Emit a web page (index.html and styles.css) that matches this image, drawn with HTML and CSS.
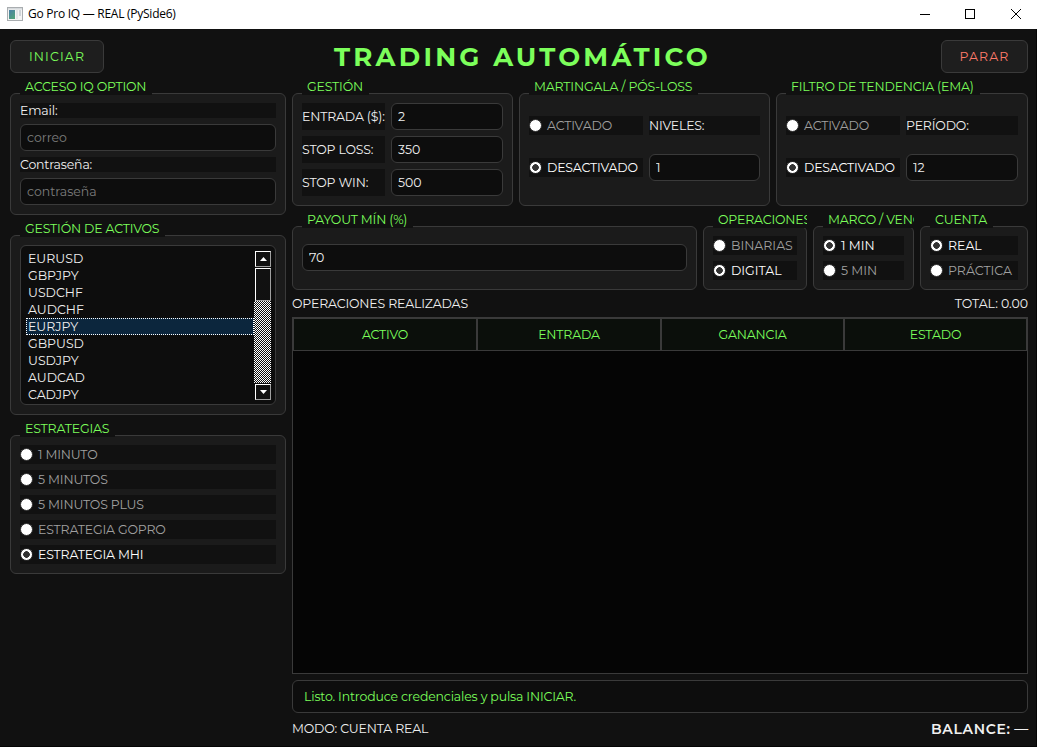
FILE: index.html
```html
<!DOCTYPE html>
<html lang="es">
  <head>
    <meta charset="UTF-8" />
    <meta name="viewport" content="width=device-width, initial-scale=1.0" />
    <title>Go Pro IQ — REAL (PySide6)</title>
    <link rel="stylesheet" href="styles.css">
  </head>
  <body>
    <div class="barra">
      <svg class="icono-app" width="16" height="14" viewBox="0 0 16 14">
        <defs>
          <linearGradient id="azul" x1="0" y1="0" x2="0.6" y2="1">
            <stop offset="0" stop-color="#4a7fa8" />
            <stop offset="1" stop-color="#4fa07c" />
          </linearGradient>
        </defs>
        <rect x="0.5" y="0.5" width="15" height="13" fill="#f4f4f4" stroke="#a9adb0" />
        <rect x="1" y="1" width="14" height="1.5" fill="#d5d9dc" />
        <rect x="2" y="3" width="6" height="9" fill="url(#azul)" />
        <rect x="9" y="3" width="2" height="9" fill="#e2e5e8" />
        <rect x="12" y="3" width="2" height="6" fill="#cfd4d8" />
      </svg>
      <span class="barra-titulo">Go Pro IQ — REAL (PySide6)</span>
      <svg class="controles" width="102" height="12" viewBox="0 0 102 12" fill="none" stroke="#000">
        <path d="M0 6.5h10" />
        <rect x="45.5" y="1.5" width="9" height="9" />
        <path d="M91 1l10 10M101 1L91 11" />
      </svg>
    </div>

    <div class="ventana">
      <header class="cabecera">
        <button class="boton iniciar" type="button">INICIAR</button>
        <h1>TRADING AUTOMÁTICO</h1>
        <button class="boton parar" type="button">PARAR</button>
      </header>

      <div class="contenido">
        <aside class="izquierda">
          <section class="grupo acceso">
            <h2>ACCESO IQ OPTION</h2>
            <label class="etiqueta" for="email">Email:</label>
            <input type="text" id="email" placeholder="correo" />
            <label class="etiqueta" for="clave">Contraseña:</label>
            <input type="password" id="clave" placeholder="contraseña" />
          </section>

          <section class="grupo activos">
            <h2>GESTIÓN DE ACTIVOS</h2>
            <div class="lista">
              <ul>
                <li>EURUSD</li>
                <li>GBPJPY</li>
                <li>USDCHF</li>
                <li>AUDCHF</li>
                <li class="elegido">EURJPY</li>
                <li>GBPUSD</li>
                <li>USDJPY</li>
                <li>AUDCAD</li>
                <li>CADJPY</li>
              </ul>
              <div class="scroll">
                <div class="flecha"><svg width="7" height="4"><path d="M0 4L3.5 0L7 4z" fill="#fff" /></svg></div>
                <div class="pulgar"></div>
                <div class="pista"></div>
                <div class="flecha"><svg width="7" height="4"><path d="M0 0L3.5 4L7 0z" fill="#fff" /></svg></div>
              </div>
            </div>
          </section>

          <section class="grupo radios">
            <h2>ESTRATEGIAS</h2>
            <label class="radio"><input type="radio" name="estrategia" /><span>1 MINUTO</span></label>
            <label class="radio"><input type="radio" name="estrategia" /><span>5 MINUTOS</span></label>
            <label class="radio"><input type="radio" name="estrategia" /><span>5 MINUTOS PLUS</span></label>
            <label class="radio"><input type="radio" name="estrategia" /><span>ESTRATEGIA GOPRO</span></label>
            <label class="radio"><input type="radio" name="estrategia" checked /><span>ESTRATEGIA MHI</span></label>
          </section>
        </aside>

        <main class="derecha">
          <div class="fila fila-gestion">
            <section class="grupo gestion">
              <h2>GESTIÓN</h2>
              <label class="etiqueta" for="entrada">ENTRADA ($):</label>
              <input type="text" id="entrada" value="2" />
              <label class="etiqueta" for="loss">STOP LOSS:</label>
              <input type="text" id="loss" value="350" />
              <label class="etiqueta" for="win">STOP WIN:</label>
              <input type="text" id="win" value="500" />
            </section>

            <section class="grupo doble">
              <h2>MARTINGALA / PÓS-LOSS</h2>
              <label class="radio"><input type="radio" name="martingala" /><span>ACTIVADO</span></label>
              <label class="etiqueta" for="niveles">NIVELES:</label>
              <label class="radio"><input type="radio" name="martingala" checked /><span>DESACTIVADO</span></label>
              <input type="text" id="niveles" value="1" />
            </section>

            <section class="grupo doble">
              <h2>FILTRO DE TENDENCIA (EMA)</h2>
              <label class="radio"><input type="radio" name="filtro" /><span>ACTIVADO</span></label>
              <label class="etiqueta" for="periodo">PERÍODO:</label>
              <label class="radio"><input type="radio" name="filtro" checked /><span>DESACTIVADO</span></label>
              <input type="text" id="periodo" value="12" />
            </section>
          </div>

          <div class="fila fila-payout">
            <section class="grupo payout">
              <h2>PAYOUT MÍN (%)</h2>
              <input type="text" id="payout" value="70" />
            </section>

            <section class="grupo radios">
              <h2>OPERACIONES</h2>
              <label class="radio"><input type="radio" name="operaciones" /><span>BINARIAS</span></label>
              <label class="radio"><input type="radio" name="operaciones" checked /><span>DIGITAL</span></label>
            </section>

            <section class="grupo radios">
              <h2>MARCO / VENC</h2>
              <label class="radio"><input type="radio" name="marco" checked /><span>1 MIN</span></label>
              <label class="radio"><input type="radio" name="marco" /><span>5 MIN</span></label>
            </section>

            <section class="grupo radios">
              <h2>CUENTA</h2>
              <label class="radio"><input type="radio" name="cuenta" checked /><span>REAL</span></label>
              <label class="radio"><input type="radio" name="cuenta" /><span>PRÁCTICA</span></label>
            </section>
          </div>

          <div class="resumen">
            <span>OPERACIONES REALIZADAS</span>
            <span class="total">TOTAL: 0.00</span>
          </div>

          <div class="tabla">
            <div class="tabla-cabecera">
              <div>ACTIVO</div>
              <div>ENTRADA</div>
              <div>GANANCIA</div>
              <div>ESTADO</div>
            </div>
          </div>

          <div class="estado">Listo. Introduce credenciales y pulsa INICIAR.</div>

          <footer class="pie">
            <span>MODO: CUENTA REAL</span>
            <span class="balance"><b>BALANCE:</b> —</span>
          </footer>
        </main>
      </div>
    </div>
  </body>
</html>
```
FILE: styles.css
```css
* {
  box-sizing: border-box;
}
body {
  margin: 0;
  width: 1037px;
  height: 747px;
  display: flex;
  flex-direction: column;
  overflow: hidden;
  background: #111;
  color: #f0f0f0;
  font-family: Montserrat, Inter, sans-serif;
  font-size: 12.5px;
  line-height: 15px;
  letter-spacing: -0.17px;
}
.barra {
  height: 29px;
  background: #fff;
  color: #000;
  display: flex;
  align-items: center;
  padding: 0 15px 2px 7px;
  font-family: "Segoe UI", "Open Sans", sans-serif;
  font-size: 12px;
}
.barra-titulo {
  margin-left: 5px;
  letter-spacing: -0.26px;
}
.controles {
  margin-left: auto;
}
.ventana {
  flex: 1;
  padding: 11px 8px 8px 10px;
  border-right: 1px solid #050505;
  border-bottom: 1px solid #050505;
  display: flex;
  flex-direction: column;
  gap: 6px;
}
.cabecera {
  height: 33px;
  display: flex;
  justify-content: space-between;
  align-items: center;
}
h1 {
  margin: 2px 0 0;
  font-size: 26px;
  font-weight: 700;
  letter-spacing: 3.2px;
  color: #7cff5b;
}
.boton {
  height: 33px;
  padding: 0;
  border: 1px solid #3a3a3a;
  border-radius: 6px;
  background: #1e1e1e;
  font: inherit;
  letter-spacing: 1.1px;
}
.iniciar {
  width: 94px;
  color: #7cff5b;
}
.parar {
  width: 87px;
  color: #ff7b6b;
}
.contenido {
  flex: 1;
  display: grid;
  grid-template-columns: 276px 736px;
  gap: 6px;
}
.izquierda,
.derecha {
  display: flex;
  flex-direction: column;
}
.izquierda {
  gap: 6px;
}

/* cajas con titulo */
.grupo {
  position: relative;
  margin-top: 14px;
  padding: 9px;
  border: 1px solid #3a3a3a;
  border-radius: 6px;
  background: #1b1b1b;
}
.grupo h2 {
  position: absolute;
  top: -15px;
  left: 9px;
  max-width: calc(100% - 8px);
  margin: 0;
  padding: 0 6px 0 5px;
  overflow: hidden;
  white-space: nowrap;
  background: #111;
  color: #7cff5b;
  font-size: 12.5px;
  font-weight: 400;
  line-height: 16px;
}
.fila-payout .radios h2 {
  padding-right: 0;
}
.fila-payout .radios:last-child h2 {
  padding-right: 6px;
}
.fila-payout .radio {
  letter-spacing: 0;
}
.etiqueta {
  display: flex;
  align-items: center;
  background: #111;
  white-space: nowrap;
}
input[type="text"],
input[type="password"] {
  width: 100%;
  height: 27px;
  padding: 0 6px;
  border: 1px solid #3a3a3a;
  border-radius: 6px;
  background: #0d0d0d;
  color: #f0f0f0;
  font: inherit;
}
input::placeholder {
  color: #7d7d7d;
}
.acceso {
  display: flex;
  flex-direction: column;
  gap: 6px;
}
.radios {
  display: flex;
  flex-direction: column;
  gap: 6px;
}
.radio {
  display: flex;
  align-items: center;
  gap: 5px;
  height: 19px;
  background: #111;
  color: #a0a0a0;
  white-space: nowrap;
}
.radio input {
  appearance: none;
  flex: none;
  width: 13px;
  height: 13px;
  margin: 0;
  border: 1px solid #2b2b2b;
  border-radius: 50%;
  background: #fff;
}
.radio input:checked {
  background: radial-gradient(circle, #333 0 3px, #fff 3.6px);
}
.radio input:checked + span {
  color: #fff;
}

/* lista de activos */
.lista {
  height: 160px;
  padding: 4px;
  border: 1px solid #3a3a3a;
  border-radius: 6px;
  background: #0d0d0d;
  display: flex;
}
ul {
  flex: 1;
  height: 152px;
  margin: 0;
  padding: 0 0 0 1px;
  list-style: none;
  overflow: hidden;
  letter-spacing: 0;
}
li {
  height: 17px;
  padding-left: 2px;
  line-height: 17px;
}
.elegido {
  padding-left: 1px;
  border: 1px dotted #fff;
  background: #0c263d;
  line-height: 15px;
}
.scroll {
  width: 17px;
  height: 150px;
  display: flex;
  flex-direction: column;
}
.flecha,
.pulgar {
  margin: 1px 0 0 1px;
  border: 1px solid #fff;
  border-right-color: #a0a0a0;
  border-bottom-color: #a0a0a0;
  background: #111;
}
.flecha {
  height: 16px;
  display: flex;
  align-items: center;
  justify-content: center;
}
.pulgar {
  height: 33px;
}
.pista {
  flex: 1;
  background: repeating-conic-gradient(#fff 0 25%, #111 0 50%) 0 0 / 2px 2px;
}

.fila {
  display: grid;
  gap: 6px;
}
.fila-gestion {
  grid-template-columns: 221px 251px 252px;
  height: 127px;
}
.fila-payout {
  grid-template-columns: 405px 104px 101px 108px;
  height: 78px;
  margin-top: 6px;
}
.gestion {
  display: grid;
  grid-template-columns: 83px 1fr;
  gap: 6px;
}
.doble {
  display: grid;
  grid-template-columns: 114px 1fr;
  grid-template-rows: 19px 27px;
  column-gap: 6px;
  row-gap: 19px;
  align-items: center;
  padding-top: 22px;
}
.doble .etiqueta {
  height: 19px;
}
.payout {
  display: flex;
  align-items: center;
  padding-bottom: 11px;
}
.resumen {
  display: flex;
  justify-content: space-between;
  margin: 6px 0;
}
.total {
  letter-spacing: -0.05px;
}
.tabla {
  flex: 1;
  border: 1px solid #3a3a3a;
  background: #050505;
}
.tabla-cabecera {
  display: grid;
  grid-template-columns: 184px 184px 183px 183px;
  height: 33px;
  background: #0b0f0b;
  color: #7cff5b;
}
.tabla-cabecera div {
  display: flex;
  align-items: center;
  justify-content: center;
  border: 1px solid #3a3a3a;
}
.estado {
  height: 33px;
  margin: 6px 0;
  padding: 0 11px;
  border: 1px solid #3a3a3a;
  border-radius: 6px;
  background: #0d0d0d;
  color: #7cff5b;
  line-height: 31px;
}
.pie {
  height: 19px;
  display: flex;
  justify-content: space-between;
  align-items: center;
}
.balance {
  padding-top: 1px;
  font-size: 14px;
}
.balance b {
  font-weight: 600;
  letter-spacing: 0.7px;
}
```
